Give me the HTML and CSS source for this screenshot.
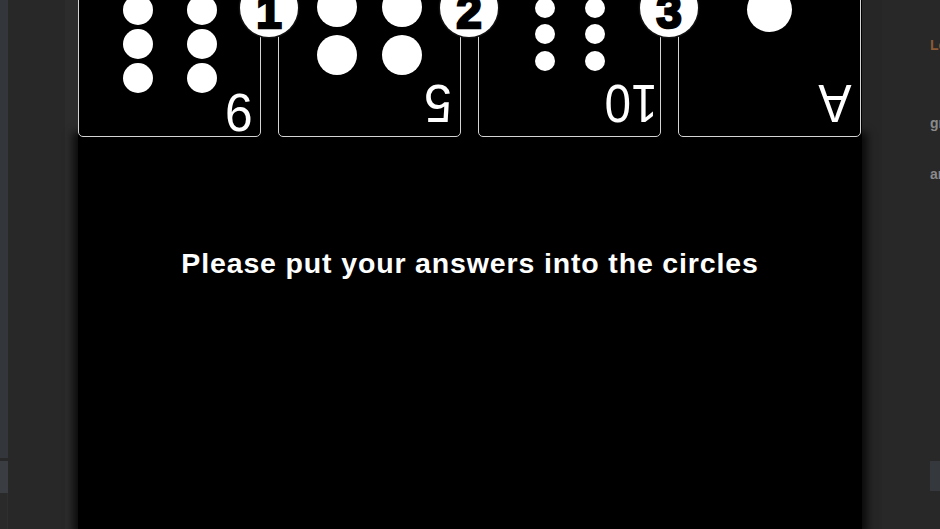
FILE: index.html
```html
<!DOCTYPE html>
<html>
<head>
<meta charset="utf-8">
<link rel="stylesheet" href="styles.css">
</head>
<body>
<div class="app">
  <aside class="left-rail">
    <div class="rail-top"></div>
    <div class="rail-box"></div>
    <div class="rail-bottom"></div>
  </aside>
  <div class="gutter"></div>
  <main class="stage">
    <div class="cards">
      <div class="card six">
        <div class="pips"><i></i><i></i><i></i><i></i><i></i><i></i></div>
        <span class="rank">9</span>
        <span class="badge">1</span>
      </div>
      <div class="card five">
        <div class="pips"><i></i><i></i><i></i><i></i></div>
        <span class="rank">5</span>
        <span class="badge">2</span>
      </div>
      <div class="card ten">
        <div class="pips"><i></i><i></i><i></i><i></i><i></i><i></i></div>
        <span class="rank">10</span>
        <span class="badge">3</span>
      </div>
      <div class="card ace">
        <div class="pips"><i></i></div>
        <span class="rank">A</span>
      </div>
    </div>
    <div class="lower">
      <p class="prompt">Please put your answers into the circles</p>
    </div>
  </main>
  <aside class="right-pane">
    <span class="snip orange">Lo</span>
    <span class="snip g1">gı</span>
    <span class="snip g2">ar</span>
    <div class="right-box"></div>
  </aside>
</div>
</body>
</html>
```
FILE: styles.css
```css
html, body {
  margin: 0;
  padding: 0;
  background: #282828;
  overflow: hidden;
}
.app {
  display: flex;
  width: 940px;
  height: 529px;
  overflow: hidden;
  font-family: "Liberation Sans", Arial, sans-serif;
}
.left-rail {
  width: 8px;
  flex: none;
  display: flex;
  flex-direction: column;
}
.rail-top {
  height: 458px;
  background: #33363a;
}
.rail-box {
  height: 32px;
  margin-top: 3px;
  background: #3a3d41;
}
.rail-bottom {
  flex: 1;
  background: #2a2a2a;
  border-right: 1px solid #2f2f2f;
}
.gutter {
  width: 70px;
  flex: none;
  background: linear-gradient(to right, #282828 0, #282828 57px, #2c2c2c 57px, #2c2c2c 70px);
}
.stage {
  width: 784px;
  flex: none;
  display: flex;
  flex-direction: column;
}
.cards {
  display: flex;
  gap: 17px;
  margin-top: -30px;
  background: #000;
  position: relative;
  z-index: 2;
}
.card {
  position: relative;
  box-sizing: border-box;
  width: 183px;
  height: 167px;
  border: 1.5px solid #d4d4d4;
  border-radius: 5px;
  background: #000;
  display: flex;
  flex-direction: column;
}
.pips {
  display: flex;
  flex-wrap: wrap;
  justify-content: center;
  margin: 0 auto;
}
.pips i {
  display: block;
  border-radius: 50%;
  background: #fff;
}
.six .pips {
  width: 94px;
  padding-top: 23.5px;
  column-gap: 34px;
  row-gap: 4px;
}
.six .pips i { width: 30px; height: 30px; }
.five .pips {
  width: 105px;
  padding-top: 15.5px;
  column-gap: 25px;
  row-gap: 8px;
}
.five .pips i { width: 40px; height: 40px; }
.ten .pips {
  width: 70px;
  padding-top: 26.5px;
  column-gap: 30px;
  row-gap: 6.5px;
}
.ten .pips i { width: 20px; height: 20px; }
.ace .pips {
  padding-top: 16px;
}
.ace .pips i { width: 45px; height: 45px; }
.rank {
  display: block;
  margin-top: auto;
  align-self: flex-end;
  margin-right: 6px;
  margin-bottom: 12.5px;
  height: 40px;
  font-size: 54px;
  line-height: 40px;
  color: #fff;
  transform: rotate(180deg) scaleX(0.92);
}
.five .rank { margin-right: 7px; }
.ten .rank { margin-right: -1px; transform: rotate(180deg) scaleX(0.88); }
.ace .rank { margin-right: 6.5px; }
.badge {
  position: absolute;
  top: 8px;
  right: -38px;
  box-sizing: border-box;
  width: 58px;
  height: 58px;
  padding-top: 8px;
  border-radius: 50%;
  background: #fff;
  box-shadow: 0 0 0 1.5px #111;
  color: #000;
  text-align: center;
  font-weight: 700;
  font-size: 46px;
  line-height: 50px;
  -webkit-text-stroke: 2.5px #000;
  z-index: 3;
}
.lower {
  flex: 1;
  background: #000;
  box-shadow: 0 0 8px 5px rgba(0,0,0,0.75);
  position: relative;
  z-index: 1;
  display: flex;
  justify-content: center;
}
.prompt {
  margin: 110px 0 0;
  color: #fff;
  font-weight: 700;
  font-size: 28.5px;
  letter-spacing: 0.85px;
  line-height: 32px;
  height: 32px;
}
.right-pane {
  flex: 1;
  display: flex;
  flex-direction: column;
  padding-left: 68px;
  background: linear-gradient(to right, #262626 0, #262626 20px, #282828 20px);
  font-size: 14px;
  font-weight: 700;
  overflow: hidden;
  white-space: nowrap;
}
.snip { display: block; line-height: 16px; }
.orange { color: #8c5a35; margin-top: 37px; }
.g1 { color: #8a8a8a; margin-top: 62px; }
.g2 { color: #8a8a8a; margin-top: 35px; }
.right-box {
  margin-top: auto;
  margin-bottom: 38px;
  height: 30px;
  background: #35383c;
}
```
